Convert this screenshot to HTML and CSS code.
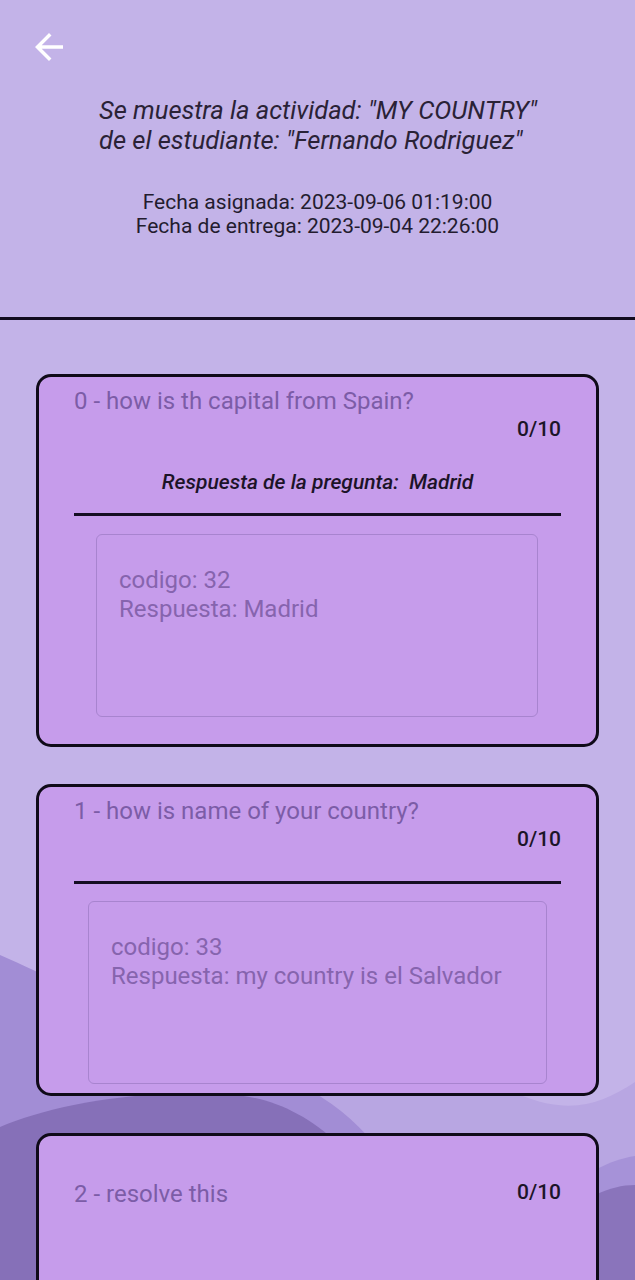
FILE: index.html
```html
<!DOCTYPE html>
<html lang="es">
<head>
<meta charset="utf-8">
<title>Actividad</title>
<link rel="stylesheet" href="styles.css">
</head>
<body>
<div class="page">
  <svg class="waves" viewBox="0 0 635 380" width="635" height="380" aria-hidden="true">
    <path fill="#b8a6e2" d="M250 195 C 380 185, 470 175, 520 195 C 570 215, 600 205, 635 182 L635 380 L250 380 Z"/>
    <path fill="#a28dd5" d="M0 55 C 30 68, 60 82, 110 110 C 190 150, 260 170, 300 185 C 330 200, 355 220, 375 245 L375 380 L0 380 Z"/>
    <path fill="#8670b8" d="M0 227 C 40 210, 100 196, 180 193 C 250 191, 290 200, 340 245 L340 380 L0 380 Z"/>
    <path fill="#a692d8" d="M595 270 C 610 262, 622 258, 635 256 L635 380 L595 380 Z"/>
    <path fill="#8a74bb" d="M595 295 C 610 288, 622 285, 635 285 L635 380 L595 380 Z"/>
  </svg>

  <header class="header">
    <button class="back" aria-label="Volver">
      <svg viewBox="0 0 24 24" width="42" height="42"><path fill="#ffffff" d="M20 11H7.83l5.59-5.59L12 4l-8 8 8 8 1.41-1.41L7.83 13H20v-2z"/></svg>
    </button>
    <h1 class="title">Se muestra la actividad: "MY COUNTRY"<br>de el estudiante: "Fernando Rodriguez"</h1>
    <p class="dates">Fecha asignada: 2023-09-06 01:19:00<br>Fecha de entrega: 2023-09-04 22:26:00</p>
  </header>

  <main class="list">
    <section class="card">
      <p class="question">0 - how is th capital from Spain?</p>
      <p class="score">0/10</p>
      <p class="expected">Respuesta de la pregunta:&nbsp; Madrid</p>
      <div class="rule"></div>
      <div class="answer answer-narrow">
        <p>codigo: 32</p>
        <p>Respuesta: Madrid</p>
      </div>
    </section>

    <section class="card card-short">
      <p class="question">1 - how is name of your country?</p>
      <p class="score">0/10</p>
      <div class="rule rule-tight"></div>
      <div class="answer answer-wide">
        <p>codigo: 33</p>
        <p>Respuesta: my country is el Salvador</p>
      </div>
    </section>

    <section class="card card-row">
      <p class="question">2 - resolve this</p>
      <p class="score">0/10</p>
    </section>
  </main>
</div>
</body>
</html>
```

FILE: styles.css
```css
* { box-sizing: border-box; }
html, body { margin: 0; padding: 0; }
body {
  font-family: Roboto, "Noto Sans", sans-serif;
  background: #c3b3e8;
}
.page {
  position: relative;
  width: 635px;
  height: 1280px;
  overflow: hidden;
  background: #c3b3e8;
}
.waves {
  position: absolute;
  left: 0;
  top: 900px;
  display: block;
}
.header {
  position: relative;
  height: 320px;
  border-bottom: 3px solid #120c1f;
  padding-top: 26px;
}
.back {
  display: block;
  margin: 0 0 0 28px;
  padding: 0;
  border: 0;
  background: none;
  width: 42px;
  height: 42px;
}
.back svg { display: block; }
.title {
  margin: 27px 0 0 99px;
  font-size: 25.5px;
  font-weight: 400;
  font-style: italic;
  line-height: 30px;
  color: #2a2236;
  white-space: nowrap;
}
.dates {
  margin: 35px 0 0 0;
  text-align: center;
  font-size: 21px;
  line-height: 24px;
  color: #231c2f;
}
.list {
  position: relative;
  display: flex;
  flex-direction: column;
  gap: 37px;
  padding: 54px 36px 0 36px;
}
.card {
  background: #c69ceb;
  border: 3px solid #0f0a18;
  border-radius: 15px;
  padding: 10px 35px 27px 35px;
}
.card p { margin: 0; }
.question {
  font-size: 24px;
  line-height: 28px;
  color: #7c5ca7;
}
.score {
  text-align: right;
  font-size: 21px;
  font-weight: 500;
  line-height: 28px;
  color: #1c1428;
}
.expected {
  margin-top: 26px !important;
  text-align: center;
  font-size: 21px;
  font-weight: 500;
  font-style: italic;
  line-height: 26px;
  color: #1c1328;
}
.rule {
  height: 3px;
  background: #150d22;
  margin-top: 18px;
}
.rule-tight { margin-top: 28px; }
.answer {
  margin-top: 18px;
  height: 183px;
  border: 1px solid #a884cf;
  border-radius: 6px;
  padding: 31px 22px 0 22px;
  font-size: 24px;
  line-height: 29px;
  color: #8664ae;
}
.card-short { padding-bottom: 9px; }
.card-short .answer { margin-top: 17px; }
.answer-narrow { margin-left: 22px; margin-right: 23px; }
.answer-wide { margin-left: 14px; margin-right: 14px; }
.card-row {
  display: flex;
  justify-content: space-between;
  align-items: center;
  padding-top: 44px;
  height: 200px;
  align-items: flex-start;
}
.card-row .score { margin-top: -2px; }
```
